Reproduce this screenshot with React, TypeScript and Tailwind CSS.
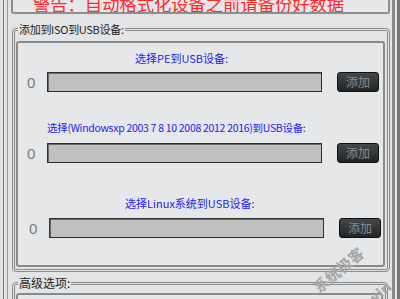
const cjk = "font-['Noto_Sans_CJK_SC','Noto_Sans',sans-serif]";

function FieldRow({ shift }: { shift?: boolean }) {
    return (
        <div className={`flex h-[20px] items-center ${shift ? "pl-[11px]" : "pl-[9px]"}`}>
            <span className="w-[20px] font-['Liberation_Sans',sans-serif] text-[15px] leading-none text-[#7b7b7b]">0</span>
            <div className="h-[20px] w-[275px] border border-[#2e2e2e] bg-[#c0c0c0] shadow-[inset_1px_1px_0_#6a6a6a]" />
            <button className="ml-[15px] flex h-[20px] w-[42px] items-center justify-center rounded-[3px] border border-[#101010] bg-[linear-gradient(#45484b,#222427)] text-[12px] leading-none text-[#8c8c8c]">
                添加
            </button>
        </div>
    );
}

export default function App() {
    return (
        <div className={`relative flex h-[299px] w-[400px] overflow-hidden bg-[#e3e4e5] ${cjk}`}>
            {/* left window frame */}
            <div className="flex w-[11px] shrink-0">
                <div className="w-[3px]" />
                <div className="w-px bg-[#777]" />
                <div className="w-[3px]" />
                <div className="w-px bg-[#9c9c9c]" />
                <div className="w-[3px]" />
            </div>

            <div className="flex w-[379px] shrink-0 flex-col">
                {/* warning box, clipped at top */}
                <div className="flex h-[14px] shrink-0 items-end overflow-hidden rounded-b-[3px] border-2 border-t-0 border-[#8e8e8e] bg-[#e6e7e8] pl-[20px]">
                    <span className="mb-0 whitespace-nowrap text-[17.3px] leading-none text-[#ff2a2a]">
                        警告：自动格式化设备之前请备份好数据
                    </span>
                </div>

                {/* group: add iso to usb */}
                <fieldset className="mt-[8px] ml-px shrink-0 rounded-[4px] border-[3px] border-double border-[#8a8a8a] p-0">
                    <legend className="ml-[3px] px-[1px] text-[11px] leading-[14px] tracking-[-0.3px] text-[#1e1e1e]">
                        添加到ISO到USB设备:
                    </legend>
                    <div className="mt-[5px] mr-[2px] mb-[2px] ml-px h-[226px] rounded-[3px] border-2 border-[#8a8a8a] bg-[#e6e7e8]">
                        <div className="mt-[8px] pl-[29px] text-[11px] leading-[14px] text-[#2424f0]">
                            <p className="ml-[88px]">选择PE到USB设备:</p>
                        </div>
                        <div className="mt-[7px]">
                            <FieldRow />
                        </div>
                        <div className="mt-[29px] pl-[29px] text-[10.5px] leading-[14px] text-[#2424f0]">
                            <p className="whitespace-nowrap tracking-[-0.3px]">选择(Windowsxp 2003 7 8 10 2008 2012 2016)到USB设备:</p>
                        </div>
                        <div className="mt-[8px]">
                            <FieldRow />
                        </div>
                        <div className="mt-[33px] pl-[29px] text-[11px] leading-[14px] text-[#2424f0]">
                            <p className="ml-[78px]">选择Linux系统到USB设备:</p>
                        </div>
                        <div className="mt-[8px]">
                            <FieldRow shift />
                        </div>
                    </div>
                </fieldset>

                {/* group: advanced */}
                <fieldset className="mt-[4px] mr-[2px] ml-px shrink-0 rounded-[4px] border-[3px] border-double border-[#8a8a8a] p-0">
                    <legend className="ml-[3px] px-[1px] text-[12px] leading-[14px] text-[#1e1e1e]">高级选项:</legend>
                    <div className="mt-[3px] mr-[2px] ml-px h-[40px] rounded-[3px] border-2 border-[#8a8a8a] bg-[#e6e7e8]" />
                </fieldset>
            </div>

            {/* right window frame */}
            <div className="flex w-[10px] shrink-0">
                <div className="w-[2px]" />
                <div className="w-[3px] bg-[#8a8a8a]" />
                <div className="w-[2px]" />
                <div className="w-[3px] bg-[#777]" />
            </div>

            {/* watermark */}
            <span className="absolute top-[262px] left-[308px] -rotate-[40deg] whitespace-nowrap text-[15px] font-bold leading-none text-[#a5a5a5]">
                系统极客
            </span>
            <span className="absolute top-[290px] left-[356px] -rotate-[40deg] whitespace-nowrap font-['DejaVu_Sans',sans-serif] text-[14px] font-bold leading-none text-[#a5a5a5]">
                l.win
            </span>
        </div>
    );
}
